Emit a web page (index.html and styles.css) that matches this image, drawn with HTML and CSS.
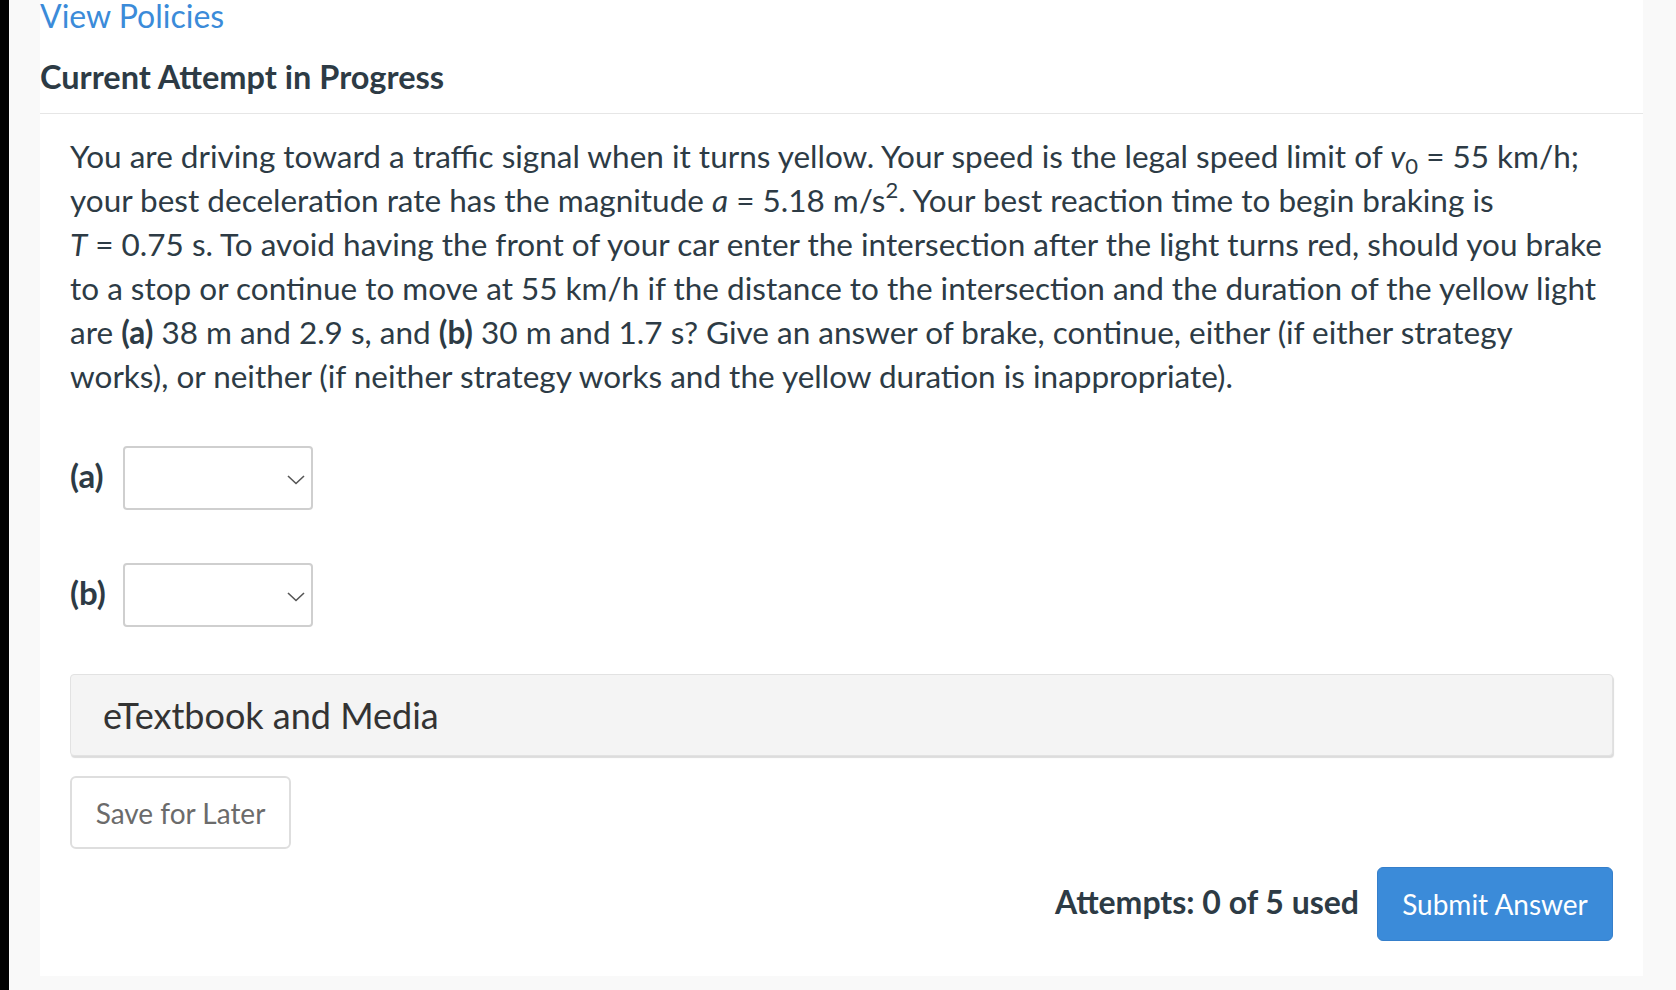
FILE: index.html
```html
<!DOCTYPE html>
<html lang="en">
<head>
<meta charset="utf-8">
<title>Current Attempt in Progress</title>
<link rel="stylesheet" href="styles.css">
</head>
<body>
<div class="edge"></div>
<div class="page">
  <main class="panel">
    <header class="panel-head">
      <a class="policies" href="#">View Policies</a>
      <h2 class="attempt-title">Current Attempt in Progress</h2>
    </header>
    <section class="question">
      <p class="stem">You are driving toward a traffic signal when it turns yellow. Your speed is the legal speed limit of <span class="math"><i>v</i><sub>0</sub>&nbsp;=&nbsp;55</span> km/h; your best deceleration rate has the magnitude <span class="math"><i>a</i>&nbsp;=&nbsp;5.18</span> m/s<sup>2</sup>. Your best reaction time to begin braking is <span class="math"><i>T</i>&nbsp;=&nbsp;0.75</span> s. To avoid having the front of your car enter the intersection after the light turns red, should you brake to a stop or continue to move at 55 km/h if the distance to the intersection and the duration of the yellow light are <b>(a)</b> 38 m and 2.9 s, and <b>(b)</b> 30 m and 1.7 s? Give an answer of brake, continue, either (if either strategy works), or neither (if neither strategy works and the yellow duration is inappropriate).</p>
      <div class="answer-row">
        <span class="answer-label">(a)</span>
        <div class="select" role="combobox" aria-label="answer a">
          <svg class="chev" width="18" height="10" viewBox="0 0 18 10"><path d="M1 1 L9 8.5 L17 1" fill="none" stroke="#555" stroke-width="1.6"/></svg>
        </div>
      </div>
      <div class="answer-row second">
        <span class="answer-label">(b)</span>
        <div class="select" role="combobox" aria-label="answer b">
          <svg class="chev" width="18" height="10" viewBox="0 0 18 10"><path d="M1 1 L9 8.5 L17 1" fill="none" stroke="#555" stroke-width="1.6"/></svg>
        </div>
      </div>
      <div class="media-box">eTextbook and Media</div>
      <button class="save-btn" type="button">Save for Later</button>
      <div class="submit-row">
        <span class="attempts">Attempts: 0 of 5 used</span>
        <button class="submit-btn" type="button">Submit Answer</button>
      </div>
    </section>
  </main>
</div>
</body>
</html>
```
FILE: styles.css
```css
html, body {
  margin: 0;
  padding: 0;
}
body {
  display: flex;
  height: 990px;
  overflow: hidden;
  background: #f9f9f9;
  font-family: Lato, "Noto Sans", sans-serif;
  color: #2d3b45;
}
.edge {
  width: 9px;
  flex: none;
  background: #000;
}
.page {
  flex: 1;
  padding: 0 33px 14px 31px;
  display: flex;
  flex-direction: column;
}
.panel {
  flex: 1;
  background: #fff;
}
.panel-head {
  border-bottom: 1px solid #e6e6e6;
  padding-bottom: 16px;
}
.policies {
  display: block;
  margin-top: -4px;
  font-size: 32px;
  line-height: 40px;
  color: #3b8bd9;
  text-decoration: none;
}
.attempt-title {
  margin: 21px 0 0;
  font-size: 32.5px;
  line-height: 40px;
  font-weight: 700;
  color: #2d3b45;
}
.question {
  padding: 0 30px 34px 30px;
}
.stem {
  margin: 20px 0 0;
  font-size: 31.5px;
  line-height: 44px;
}
.math {
  white-space: nowrap;
}
.stem i {
  font-style: italic;
}
.stem sub, .stem sup {
  font-size: 22px;
  line-height: 0;
}
.stem sub {
  vertical-align: -6px;
}
.stem sup {
  vertical-align: 14px;
}
.answer-row {
  display: flex;
  align-items: center;
  gap: 15px;
  margin-top: 48px;
  height: 64px;
}
.answer-row.second {
  margin-top: 53px;
}
.answer-row .answer-label {
  margin-top: -6px;
}
.answer-label {
  font-size: 33px;
  font-weight: 700;
  width: 38px;
}
.select {
  box-sizing: border-box;
  width: 190px;
  height: 64px;
  border: 2px solid #cfcfcf;
  border-radius: 4px;
  background: #fff;
  display: flex;
  align-items: center;
  justify-content: flex-end;
  padding: 0 6px 0 0;
}
.chev {
  display: block;
  margin-top: 4px;
}
.media-box {
  box-sizing: border-box;
  margin-top: 47px;
  height: 82px;
  background: #f4f4f4;
  border: 1px solid #e2e2e2;
  border-radius: 4px;
  box-shadow: 1px 2px 1px #dcdcdc;
  padding: 0 32px;
  display: flex;
  align-items: center;
  font-size: 36px;
  color: #333;
}
.save-btn {
  box-sizing: border-box;
  margin-top: 20px;
  width: 221px;
  height: 73px;
  background: #fff;
  border: 2px solid #dedede;
  border-radius: 6px;
  font-family: Lato, "Noto Sans", sans-serif;
  font-size: 28px;
  color: #6b6b6b;
  padding: 0;
}
.submit-row {
  margin-top: 18px;
  display: flex;
  justify-content: flex-end;
  align-items: center;
  gap: 18px;
}
.attempts {
  font-size: 32px;
  font-weight: 700;
  margin-top: -5px;
}
.submit-btn {
  box-sizing: border-box;
  width: 236px;
  height: 74px;
  background: #3b8bd9;
  border: 1px solid #357fcb;
  border-radius: 6px;
  color: #fff;
  font-family: Lato, "Noto Sans", sans-serif;
  font-size: 28px;
  padding: 0;
}
```
